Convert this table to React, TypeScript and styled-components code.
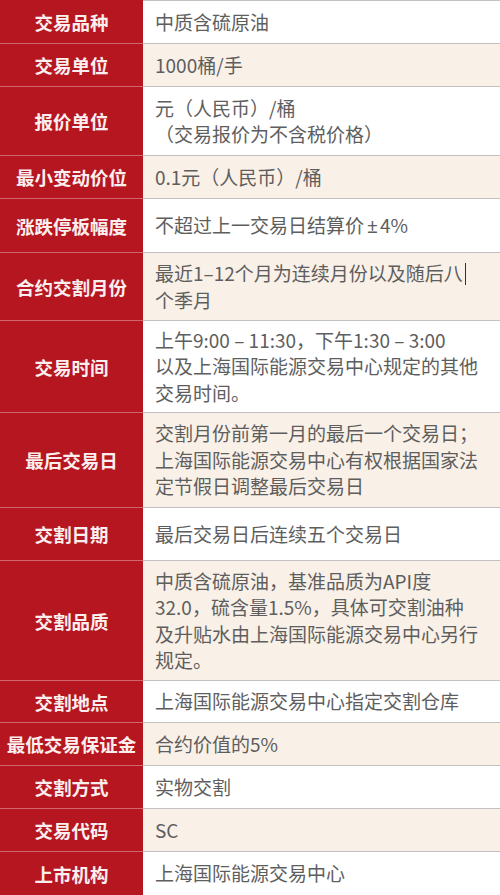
import React from 'react';
import styled, { createGlobalStyle } from 'styled-components';

// Spec sheet for the crude oil futures contract: red label column, alternating value rows

const GlobalStyle = createGlobalStyle`
  html, body {
    margin: 0;
    padding: 0;
    background: #ffffff;
  }
  body {
    font-family: "Noto Sans CJK SC", "Noto Sans", sans-serif;
  }
`;

const Table = styled.div`
  width: 500px;
  display: flex;
  flex-direction: column;
`;

const Row = styled.div<{ $h: number }>`
  display: grid;
  grid-template-columns: 143px 1fr;
  height: ${(p) => p.$h}px;
`;

const Label = styled.div<{ $first: boolean }>`
  background: #b5161f;
  color: #fbeeee;
  font-weight: 700;
  font-size: 18.5px;
  display: flex;
  align-items: center;
  justify-content: center;
  white-space: nowrap;
  border-top: ${(p) => (p.$first ? 'none' : '1.5px solid #d2676b')};
  box-sizing: border-box;
`;

const Value = styled.div<{ $alt: boolean }>`
  background: ${(p) => (p.$alt ? '#f9f0e7' : '#ffffff')};
  color: #5e5e5e;
  font-size: 19px;
  line-height: 26.5px;
  display: flex;
  flex-direction: column;
  justify-content: center;
  padding: 0 10px 0 12px;
  border-top: 1.5px solid #c3c1bf;
  box-sizing: border-box;
`;

const Line = styled.span`
  display: block;
  white-space: nowrap;
`;

// the plus-minus sign is narrow in the original, not full width
const Latin = styled.span`
  font-family: "Noto Sans", sans-serif;
  margin: 0 2px 0 3px;
`;

const Caret = styled.span`
  display: inline-block;
  width: 1.5px;
  height: 22px;
  margin-left: 2px;
  vertical-align: -4px;
  background: #333;
`;

type Spec = { label: string; lines: React.ReactNode[]; h: number };

const specs: Spec[] = [
  { label: '交易品种', lines: ['中质含硫原油'], h: 43 },
  { label: '交易单位', lines: ['1000桶/手'], h: 43 },
  { label: '报价单位', lines: ['元（人民币）/桶', '（交易报价为不含税价格）'], h: 69 },
  { label: '最小变动价位', lines: ['0.1元（人民币）/桶'], h: 43 },
  {
    label: '涨跌停板幅度',
    lines: [
      <>
        不超过上一交易日结算价<Latin>±</Latin>4%
      </>,
    ],
    h: 54,
  },
  {
    label: '合约交割月份',
    lines: [
      <>
        最近1–12个月为连续月份以及随后八
        <Caret />
      </>,
      '个季月',
    ],
    h: 68,
  },
  {
    label: '交易时间',
    lines: ['上午9:00 – 11:30，下午1:30 – 3:00', '以及上海国际能源交易中心规定的其他', '交易时间。'],
    h: 92,
  },
  {
    label: '最后交易日',
    lines: ['交割月份前第一月的最后一个交易日；', '上海国际能源交易中心有权根据国家法', '定节假日调整最后交易日'],
    h: 95,
  },
  { label: '交割日期', lines: ['最后交易日后连续五个交易日'], h: 53 },
  {
    label: '交割品质',
    lines: [
      '中质含硫原油，基准品质为API度',
      '32.0，硫含量1.5%，具体可交割油种',
      '及升贴水由上海国际能源交易中心另行',
      '规定。',
    ],
    h: 120,
  },
  { label: '交割地点', lines: ['上海国际能源交易中心指定交割仓库'], h: 42 },
  { label: '最低交易保证金', lines: ['合约价值的5%'], h: 43 },
  { label: '交割方式', lines: ['实物交割'], h: 43 },
  { label: '交易代码', lines: ['SC'], h: 43 },
  { label: '上市机构', lines: ['上海国际能源交易中心'], h: 44 },
];

export default function App() {
  return (
    <>
      <GlobalStyle />
      <Table>
        {specs.map((s, i) => (
          <Row key={s.label} $h={s.h}>
            <Label $first={i === 0}>{s.label}</Label>
            <Value $alt={i % 2 === 1}>
              {s.lines.map((l, j) => (
                <Line key={j}>{l}</Line>
              ))}
            </Value>
          </Row>
        ))}
      </Table>
    </>
  );
}
